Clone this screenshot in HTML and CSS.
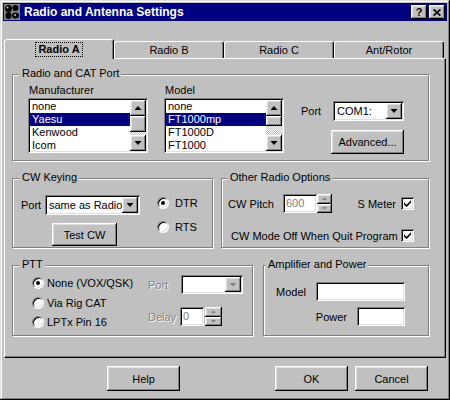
FILE: index.html
```html
<!DOCTYPE html>
<html lang="en">
<head>
<meta charset="utf-8">
<title>Radio and Antenna Settings</title>
<link rel="stylesheet" href="styles.css">
</head>
<body>
<div class="window">
  <div class="titlebar">
    <svg class="appicon" width="16" height="16" viewBox="0 0 16 16">
      <rect x="0" y="0" width="16" height="16" fill="#808080"/>
      <ellipse cx="4.5" cy="4.5" rx="3.5" ry="3.5" fill="#000"/>
      <ellipse cx="11.5" cy="4" rx="3" ry="3" fill="#000"/>
      <ellipse cx="4.5" cy="11.5" rx="3" ry="3.5" fill="#000"/>
      <ellipse cx="11.5" cy="11.5" rx="3.5" ry="3" fill="#000"/>
      <circle cx="3.5" cy="3.5" r="1" fill="#c0c0c0"/>
      <circle cx="11" cy="11" r="1" fill="#c0c0c0"/>
    </svg>
    <span class="title">Radio and Antenna Settings</span>
    <div class="tb-btn help">?</div>
    <div class="tb-btn close"><svg width="8" height="7" viewBox="0 0 8 7"><path d="M0.6 0.4L7.4 6.6M7.4 0.4L0.6 6.6" stroke="#000" stroke-width="1.7"/></svg></div>
  </div>

  <div class="main">
    <div class="tabs">
      <div class="tab active"><span class="focus">Radio A</span></div>
      <div class="tab">Radio B</div>
      <div class="tab">Radio C</div>
      <div class="tab">Ant/Rotor</div>
    </div>

    <div class="panel">
      <div class="group g-cat">
        <div class="legend">Radio and CAT Port</div>
        <div class="cat-row">
          <div class="list-col">
            <div class="lbl">Manufacturer</div>
            <div class="listbox">
              <div class="items">
                <div class="item">none</div>
                <div class="item sel">Yaesu</div>
                <div class="item">Kenwood</div>
                <div class="item">Icom</div>
              </div>
              <div class="vscroll">
                <div class="sbtn"><i class="tri-up"></i></div>
                <div class="thumb thumb-mfr"></div>
                <div class="track"></div>
                <div class="sbtn"><i class="tri-down"></i></div>
              </div>
            </div>
          </div>
          <div class="list-col model-col">
            <div class="lbl">Model</div>
            <div class="listbox">
              <div class="items">
                <div class="item">none</div>
                <div class="item sel">FT1000mp</div>
                <div class="item">FT1000D</div>
                <div class="item">FT1000</div>
              </div>
              <div class="vscroll">
                <div class="sbtn"><i class="tri-up"></i></div>
                <div class="thumb thumb-model"></div>
                <div class="track"></div>
                <div class="sbtn"><i class="tri-down"></i></div>
              </div>
            </div>
          </div>
          <div class="port-col">
            <div class="port-row">
              <span class="port-lbl">Port</span>
              <div class="combo combo-com"><span class="combo-val">COM1:</span><div class="combo-btn"><i class="tri-down"></i></div></div>
            </div>
            <div class="btn btn-adv">Advanced...</div>
          </div>
        </div>
      </div>

      <div class="row row2">
        <div class="group g-cw">
          <div class="legend">CW Keying</div>
          <div class="cw-row">
            <div class="cw-left">
              <div class="cw-port">
                <span class="cw-port-lbl">Port</span>
                <div class="combo combo-cw"><span class="combo-val">same as Radio</span><div class="combo-btn"><i class="tri-down"></i></div></div>
              </div>
              <div class="btn btn-test">Test CW</div>
            </div>
            <div class="cw-radios">
              <div class="ropt"><span class="radio on"></span>DTR</div>
              <div class="ropt rts"><span class="radio"></span>RTS</div>
            </div>
          </div>
        </div>
        <div class="group g-other">
          <div class="legend legend-other">Other Radio Options</div>
          <div class="other-r1">
            <span class="pitch-lbl">CW Pitch</span>
            <div class="spin">
              <div class="spin-field pitch-field">600</div>
              <div class="spin-btns pitch-btns">
                <div class="spin-btn"><i class="tri-s-up"></i></div>
                <div class="spin-btn"><i class="tri-s-down"></i></div>
              </div>
            </div>
            <span class="smeter">S Meter</span>
            <div class="check"><svg width="7" height="7" viewBox="0 0 7 7"><path d="M0 2.2L2.5 4.7L7 0.2V2.6L2.5 7.1L0 4.6Z" fill="#000"/></svg></div>
          </div>
          <div class="other-r2">
            <span class="cwmode">CW Mode Off When Quit Program</span>
            <div class="check"><svg width="7" height="7" viewBox="0 0 7 7"><path d="M0 2.2L2.5 4.7L7 0.2V2.6L2.5 7.1L0 4.6Z" fill="#000"/></svg></div>
          </div>
        </div>
      </div>

      <div class="row row3">
        <div class="group g-ptt">
          <div class="legend">PTT</div>
          <div class="ptt-row">
            <div class="ptt-radios">
              <div class="ropt"><span class="radio on"></span>None (VOX/QSK)</div>
              <div class="ropt ptt-r2"><span class="radio"></span>Via Rig CAT</div>
              <div class="ropt ptt-r3"><span class="radio"></span>LPTx Pin 16</div>
            </div>
            <div class="ptt-right">
              <div class="ptt-port">
                <span class="ptt-port-lbl dis">Port</span>
                <div class="combo combo-ptt"><span class="combo-val"></span><div class="combo-btn"><i class="tri-down dis-tri"></i></div></div>
              </div>
              <div class="ptt-delay">
                <span class="delay-lbl dis">Delay</span>
                <div class="spin">
                  <div class="spin-field delay-field">0</div>
                  <div class="spin-btns delay-btns">
                    <div class="spin-btn"><i class="tri-s-up"></i></div>
                    <div class="spin-btn"><i class="tri-s-down"></i></div>
                  </div>
                </div>
              </div>
            </div>
          </div>
        </div>
        <div class="group g-amp">
          <div class="legend legend-amp">Amplifier and Power</div>
          <div class="amp-col">
            <div class="amp-r1"><span class="amp-lbl">Model</span><div class="field amp-model"></div></div>
            <div class="amp-r2"><span class="amp-lbl">Power</span><div class="field amp-power"></div></div>
          </div>
        </div>
      </div>
    </div>

    <div class="bottom">
      <div class="btn btn-dlg btn-help">Help</div>
      <div class="btn btn-dlg btn-ok">OK</div>
      <div class="btn btn-dlg btn-cancel">Cancel</div>
    </div>
  </div>
</div>
</body>
</html>
```

FILE: styles.css
```css
* { box-sizing: border-box; margin: 0; padding: 0; }
html, body { width: 450px; height: 400px; overflow: hidden; }
body {
  background: #c0c0c0;
  font-family: "Liberation Sans", Arial, sans-serif;
  font-size: 11px;
  color: #000;
}

.window {
  width: 450px;
  height: 400px;
  padding: 3px;
  background: #c0c0c0;
  box-shadow: inset -1px -1px 0 #000, inset 1px 1px 0 #dfdfdf, inset -2px -2px 0 #808080, inset 2px 2px 0 #fff;
  display: flex;
  flex-direction: column;
}

/* title bar */
.titlebar {
  flex: none;
  height: 18px;
  background: #000080;
  color: #fff;
  display: flex;
  align-items: center;
  padding: 0 2px 0 1px;
}
.appicon { flex: none; display: block; }
.title {
  flex: 1;
  margin-left: 4px;
  font-size: 12px;
  font-weight: bold;
  white-space: nowrap;
  line-height: 18px;
}
.tb-btn {
  flex: none;
  width: 16px;
  height: 14px;
  background: #c0c0c0;
  color: #000;
  display: flex;
  align-items: center;
  justify-content: center;
  font-weight: bold;
  font-size: 11px;
  line-height: 12px;
  box-shadow: inset -1px -1px 0 #000, inset 1px 1px 0 #fff, inset -2px -2px 0 #808080, inset 2px 2px 0 #dfdfdf;
}
.tb-btn.help { margin-right: 2px; }
.tb-btn svg { display: block; }

/* tabs */
.main { flex: 1; padding-left: 1px; display: flex; flex-direction: column; }
.tabs {
  display: flex;
  align-items: flex-end;
  height: 20px;
  margin-top: 18px;
  margin-bottom: -1px;
  position: relative;
  z-index: 1;
}
.tab {
  width: 110px;
  height: 17px;
  margin-bottom: 1px;
  background: #c0c0c0;
  border: 1px solid;
  border-bottom: 0;
  border-color: #fff #000 transparent #fff;
  border-radius: 3px 3px 0 0;
  box-shadow: inset -1px 0 0 #808080;
  display: flex;
  align-items: center;
  justify-content: center;
  line-height: 13px;
  white-space: nowrap;
}
.tab.active {
  height: 20px;
  margin-bottom: 0;
  font-weight: bold;
  align-items: flex-start;
  padding-top: 3px;
}
.focus {
  outline: 1px dotted #000;
  padding: 0 2px;
  line-height: 13px;
}

.panel {
  flex: none;
  width: 442px;
  height: 300px;
  border: 1px solid;
  border-color: #fff #000 #000 #fff;
  box-shadow: inset -1px -1px 0 #808080;
  padding: 15px 0 0 7px;
  display: flex;
  flex-direction: column;
}

/* group boxes */
.group {
  flex: none;
  border: 1px solid #808080;
  box-shadow: inset 1px 1px 0 #fff, 1px 1px 0 #fff;
  display: flex;
  flex-direction: column;
}
.legend {
  align-self: flex-start;
  height: 13px;
  line-height: 13px;
  margin-top: -8px;
  margin-left: 6px;
  padding: 0 2px 0 3px;
  background: #c0c0c0;
  white-space: nowrap;
}
.legend-other { margin-left: 5px; }
.legend-amp { margin-left: 1px; }

.row { display: flex; flex: none; }
.row2 { margin-top: 17px; }
.row3 { margin-top: 17px; }
.g-cat { width: 417px; height: 87px; }
.g-cw { width: 201px; height: 70px; }
.g-other { width: 208px; height: 70px; margin-left: 8px; }
.g-ptt { width: 241px; height: 71px; }
.g-amp { width: 166px; height: 71px; margin-left: 10px; }

/* common controls */
.sunken, .listbox, .combo, .spin-field, .field, .check {
  background: #fff;
  box-shadow: inset 1px 1px 0 #808080, inset -1px -1px 0 #fff, inset 2px 2px 0 #000, inset -2px -2px 0 #dfdfdf;
}
.btn, .sbtn, .thumb, .combo-btn, .spin-btn {
  background: #c0c0c0;
  box-shadow: inset -1px -1px 0 #000, inset 1px 1px 0 #fff, inset -2px -2px 0 #808080, inset 2px 2px 0 #dfdfdf;
}
.btn {
  display: flex;
  align-items: center;
  justify-content: center;
  white-space: nowrap;
}

.tri-down, .tri-up {
  display: block;
  width: 7px;
  height: 4px;
  background: #000;
}
.tri-down { clip-path: polygon(0 0, 100% 0, 50% 100%); }
.tri-up { clip-path: polygon(50% 0, 100% 100%, 0 100%); }
.tri-down.dis-tri { background: #808080; }
.tri-s-up, .tri-s-down {
  display: block;
  width: 5px;
  height: 3px;
  background: #808080;
}
.tri-s-up { clip-path: polygon(50% 0, 100% 100%, 0 100%); }
.tri-s-down { clip-path: polygon(0 0, 100% 0, 50% 100%); }

.dis { color: #808080; text-shadow: 1px 1px 0 #fff; }

/* radio and CAT */
.cat-row { display: flex; margin-top: 4px; padding-left: 15px; }
.list-col { width: 120px; flex: none; }
.model-col { margin-left: 16px; }
.lbl { height: 14px; line-height: 13px; padding-left: 1px; }
.listbox {
  display: flex;
  width: 120px;
  height: 55px;
  padding: 2px;
}
.items { flex: 1; overflow: hidden; }
.item {
  height: 13px;
  line-height: 13px;
  padding-left: 2px;
  white-space: nowrap;
}
.item.sel { background: #000080; color: #fff; }
.vscroll { width: 16px; flex: none; display: flex; flex-direction: column; }
.sbtn {
  height: 16px;
  flex: none;
  display: flex;
  align-items: center;
  justify-content: center;
}
.thumb { flex: none; }
.thumb-mfr { height: 16px; }
.thumb-model { height: 10px; }
.track {
  flex: 1;
  background: repeating-conic-gradient(#c0c0c0 0 25%, #fff 0 50%) 0 0 / 2px 2px;
}

.port-col {
  margin-left: 17px;
  margin-top: 17px;
  display: flex;
  flex-direction: column;
  align-items: flex-end;
}
.port-row { display: flex; align-items: center; }
.port-lbl { width: 32px; }
.combo {
  display: flex;
  height: 20px;
  padding: 2px;
}
.combo-val {
  flex: 1;
  padding-left: 2px;
  line-height: 16px;
  white-space: nowrap;
  overflow: hidden;
}
.combo-btn {
  width: 16px;
  flex: none;
  display: flex;
  align-items: center;
  justify-content: center;
}
.combo-com { width: 71px; }
.btn-adv { width: 73px; height: 24px; margin-top: 9px; }

/* CW keying */
.cw-row { display: flex; }
.cw-left { margin-left: 8px; margin-top: 11px; display: flex; flex-direction: column; }
.cw-port { display: flex; align-items: center; height: 20px; }
.cw-port-lbl { width: 24px; }
.combo-cw { width: 95px; }
.btn-test { width: 65px; height: 23px; margin-top: 8px; margin-left: 31px; }
.cw-radios { margin-left: 17px; margin-top: 12px; }
.ropt { display: flex; align-items: center; height: 13px; white-space: nowrap; }
.ropt.rts { margin-top: 11px; }
.radio {
  flex: none;
  width: 12px;
  height: 12px;
  border-radius: 50%;
  background: #fff;
  border: 1px solid;
  border-color: #808080 #fff #fff #808080;
  box-shadow: inset 1px 1px 0 #000, inset -1px -1px 0 #dfdfdf;
  display: flex;
  align-items: center;
  justify-content: center;
}
.radio.on::after {
  content: "";
  width: 4px;
  height: 4px;
  border-radius: 50%;
  background: #000;
}
.cw-radios .radio { margin-right: 6px; }

/* other options */
.other-r1 {
  display: flex;
  align-items: center;
  height: 19px;
  margin-top: 10px;
  padding-left: 6px;
  padding-right: 14px;
}
.pitch-lbl { width: 55px; }
.spin { display: flex; height: 19px; }
.spin-field {
  color: #808080;
  line-height: 19px;
  padding-left: 3px;
}
.pitch-field { width: 34px; }
.spin-btns { display: flex; flex-direction: column; }
.pitch-btns { width: 15px; }
.spin-btn { flex: 1; display: flex; align-items: center; justify-content: center; }
.smeter { margin-left: auto; margin-right: 5px; }
.check {
  flex: none;
  width: 13px;
  height: 13px;
  display: flex;
  align-items: center;
  justify-content: center;
}
.check svg { display: block; }
.other-r2 {
  display: flex;
  align-items: center;
  height: 13px;
  margin-top: 16px;
  padding-left: 9px;
  padding-right: 14px;
}
.other-r2 .check { margin-left: auto; }

/* PTT */
.ptt-row { display: flex; }
.ptt-radios { width: 135px; padding-left: 19px; margin-top: 5px; flex: none; }
.ptt-radios .radio { margin-right: 3px; }
.ptt-r2 { margin-top: 7px; }
.ptt-r3 { margin-top: 6px; }
.ptt-right { margin-top: 4px; }
.ptt-port { display: flex; align-items: center; height: 19px; }
.ptt-port-lbl { width: 33px; }
.combo-ptt { width: 62px; height: 19px; }
.ptt-delay { display: flex; align-items: center; height: 19px; margin-top: 13px; }
.delay-lbl { width: 32px; }
.delay-field { width: 24px; }
.delay-btns { width: 17px; margin-left: 1px; }

/* amplifier */
.amp-col {
  display: flex;
  flex-direction: column;
  align-items: flex-end;
  padding-right: 23px;
}
.amp-r1 { display: flex; align-items: center; margin-top: 11px; }
.amp-r2 { display: flex; align-items: center; margin-top: 6px; }
.amp-lbl { margin-right: 10px; }
.field { height: 19px; }
.amp-model { width: 89px; }
.amp-power { width: 48px; }

/* dialog buttons */
.bottom { display: flex; margin-top: 8px; }
.btn-dlg { width: 73px; height: 25px; }
.btn-help { margin-left: 103px; }
.btn-ok { margin-left: 95px; }
.btn-cancel { margin-left: 7px; }
```
